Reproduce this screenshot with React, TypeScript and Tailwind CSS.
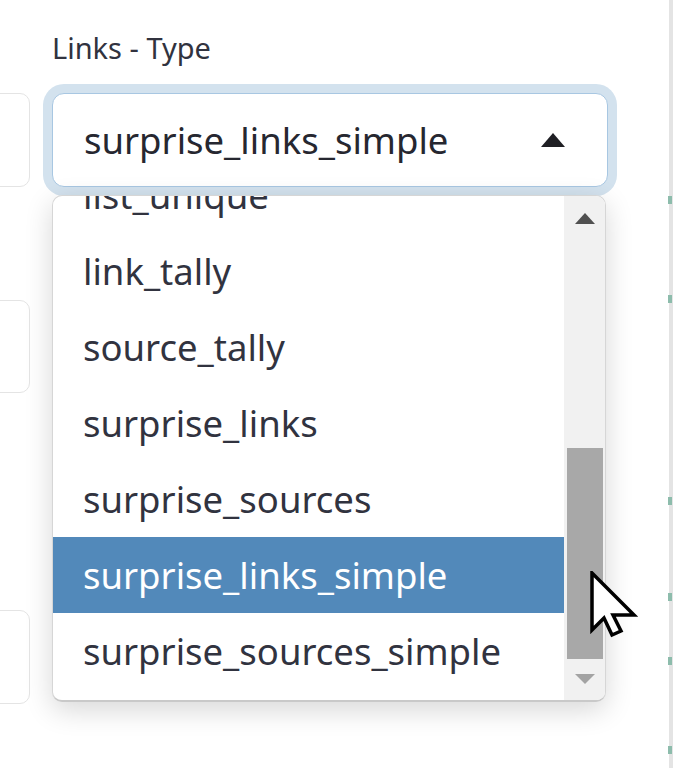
import React from "react";

const options = [
  "list_unique",
  "link_tally",
  "source_tally",
  "surprise_links",
  "surprise_sources",
  "surprise_links_simple",
  "surprise_sources_simple",
];

const ticks = [196, 295, 497, 593, 657, 746];

export default function App() {
  const selected = "surprise_links_simple";

  return (
    <div className="relative flex h-[768px] w-[674px] overflow-hidden bg-white font-['Noto_Sans',sans-serif] text-[#31333f]">
      {/* left column, only right edges of the inputs show */}
      <div className="flex w-[40px] shrink-0 flex-col">
        <LeftBox className="mt-[93px] h-[94px]" />
        <LeftBox className="mt-[113px] h-[93px]" />
        <LeftBox className="mt-[217px] h-[94px]" />
      </div>

      {/* main column */}
      <div className="w-[574px] shrink-0 pl-[12px] pt-[28px]">
        <div className="text-[29px] leading-[40px] text-[#31333f]">Links - Type</div>
        <div className="mt-[25px] flex h-[94px] w-[556px] items-center justify-between rounded-[12px] border-[1.5px] border-[#a8c7e2] bg-white pl-[31px] pr-[42px] shadow-[0_0_0_9px_#d3e2ee]">
          <span className="text-[36.5px] leading-none text-[#262730]">{selected}</span>
          <svg width="24" height="14" viewBox="0 0 24 14">
            <path d="M12 0 L24 14 L0 14 Z" fill="#1f1f24" />
          </svg>
        </div>
      </div>

      <div className="ml-auto mr-[1px] w-[4px] bg-[#e4e4e4]">
        {ticks.map((t) => (
          <div key={t} className="relative h-0">
            <div className="absolute left-[-1px] h-[8px] w-[4px] bg-[#8dbcac]" style={{ top: t }} />
          </div>
        ))}
      </div>

      {/* open menu */}
      <div className="absolute left-[52px] top-[195px] flex h-[507px] w-[554px] overflow-hidden rounded-[10px] border border-b-2 border-[#d6d6d6] border-b-[#c9c9c9] bg-white shadow-[0_8px_28px_rgba(0,0,0,0.16)]">
        <div className="flex-1 overflow-hidden">
          <div className="mt-[-39px]">
            {options.map((o) => (
              <div
                key={o}
                className={
                  o === selected
                    ? "flex h-[76px] items-center bg-[#5289ba] pl-[30px] text-[36.5px] text-white"
                    : "flex h-[76px] items-center pl-[30px] text-[36.5px] text-[#31333f]"
                }
              >
                <span className="leading-none">{o}</span>
              </div>
            ))}
          </div>
        </div>
        <div className="flex w-[41px] flex-col items-center bg-[#f1f1f1] pt-[17px]">
          <svg width="20" height="11" viewBox="0 0 20 11">
            <path d="M10 0 L20 11 L0 11 Z" fill="#505050" />
          </svg>
          <div className="mt-[224px] h-[211px] w-[36px] bg-[#a8a8a8]" />
          <svg className="mt-[15px]" width="20" height="10" viewBox="0 0 20 10">
            <path d="M0 0 L20 0 L10 10 Z" fill="#a3a3a3" />
          </svg>
        </div>
      </div>

      {/* mouse pointer */}
      <svg className="absolute left-[590px] top-[571px]" width="48" height="68" viewBox="0 0 48 68">
        <path
          d="M2 2 L2 59 L14 47 L22 64 L31 60 L23 44 L44 44 Z"
          fill="#ffffff"
          stroke="#000000"
          strokeWidth="3.5"
          strokeLinejoin="miter"
        />
      </svg>
    </div>
  );
}

function LeftBox({ className = "" }: { className?: string }) {
  return (
    <div className={`ml-[-170px] w-[200px] shrink-0 rounded-[10px] border border-[#e4e4e4] bg-white ${className}`} />
  );
}
